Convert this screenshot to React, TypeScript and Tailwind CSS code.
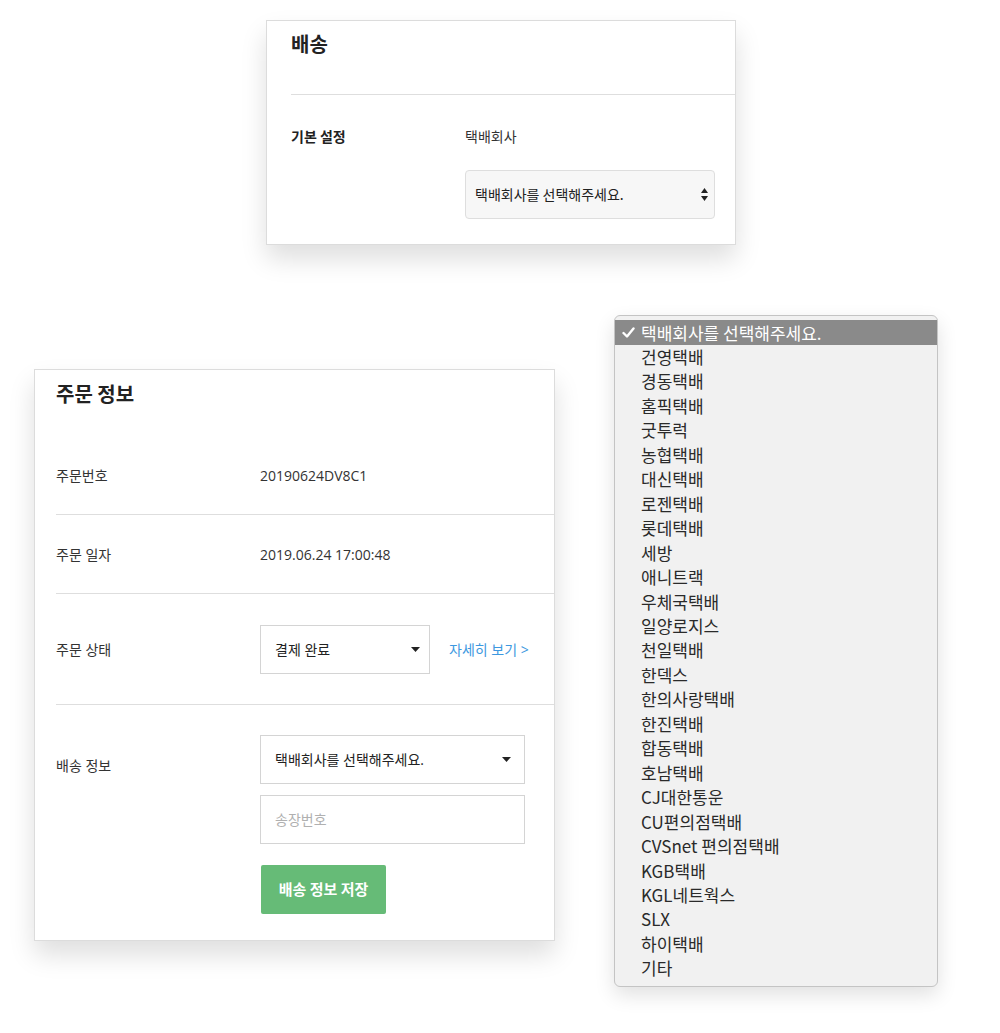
import React from "react";

const carriers = [
  "건영택배","경동택배","홈픽택배","굿투럭","농협택배","대신택배","로젠택배","롯데택배","세방","애니트랙","우체국택배","일양로지스","천일택배","한덱스","한의사랑택배","한진택배","합동택배","호남택배","CJ대한통운","CU편의점택배","CVSnet 편의점택배","KGB택배","KGL네트웍스","SLX","하이택배","기타",
];

function Caret({ className }: { className?: string }) {
  return (
    <svg width="9" height="5" viewBox="0 0 9 5" className={className}>
      <path d="M0 0 L9 0 L4.5 5 Z" fill="#222" />
    </svg>
  );
}

export default function App() {
  const font = { fontFamily: '"Open Sans", "Noto Sans CJK KR", sans-serif' };
  return (
    <div className="min-h-[1033px] w-[1000px] bg-white text-[#222]" style={font}>
      {/* Top card */}
      <div className="ml-[266px] mt-[20px] w-[470px] h-[225px] border border-[#dcdcdc] bg-white shadow-[0_14px_24px_rgba(0,0,0,0.13)]">
        <div className="pl-[24px] pt-[9px]">
          <div className="text-[20px] leading-[28px] font-bold text-[#222]" style={{ fontFamily: '"Noto Sans CJK KR", sans-serif' }}>배송</div>
          <div className="mt-[36px] border-t border-[#dedede]" />
          <div className="flex pt-[31px]">
            <div className="w-[174px] text-[14px] leading-[20px] font-bold" style={{ fontFamily: '"Noto Sans CJK KR", sans-serif' }}>기본 설정</div>
            <div className="flex flex-col">
              <div className="text-[14px] leading-[20px] text-[#333]" style={{ fontFamily: '"Noto Sans CJK KR", sans-serif' }}>택배회사</div>
              <div className="mt-[24px] flex h-[49px] w-[250px] items-center justify-between rounded-[4px] border border-[#dedede] bg-[#f7f7f7] pl-[9px] pr-[6px]">
                <span className="text-[14px] text-[#222]" style={{ fontFamily: '"Noto Sans CJK KR", sans-serif' }}>택배회사를 선택해주세요.</span>
                <svg width="7" height="13" viewBox="0 0 7 13">
                  <path d="M3.5 0 L7 5 L0 5 Z" fill="#222" />
                  <path d="M0 8 L7 8 L3.5 13 Z" fill="#222" />
                </svg>
              </div>
            </div>
          </div>
        </div>
      </div>

      <div className="mt-[70px] flex items-start">
        {/* Order info card */}
        <div className="ml-[34px] mt-[54px] w-[521px] border border-[#dcdcdc] bg-white shadow-[0_14px_24px_rgba(0,0,0,0.13)]">
          <div className="pl-[21px] pt-[10px] h-[67px]">
            <div className="text-[20px] leading-[28px] font-bold" style={{ fontFamily: '"Noto Sans CJK KR", sans-serif' }}>주문 정보</div>
          </div>
          <div className="ml-[21px] flex h-[78px] items-center border-b border-[#dedede] text-[14px] text-[#333]">
            <div className="w-[204px]">주문번호</div>
            <div>20190624DV8C1</div>
          </div>
          <div className="ml-[21px] flex h-[79px] items-center border-b border-[#dedede] text-[14px] text-[#333]">
            <div className="w-[204px]">주문 일자</div>
            <div>2019.06.24 17:00:48</div>
          </div>
          <div className="ml-[21px] flex h-[111px] items-center border-b border-[#dedede] text-[14px] text-[#333]">
            <div className="w-[204px]">주문 상태</div>
            <div className="flex h-[49px] w-[170px] items-center justify-between border border-[#d4d4d4] bg-white pl-[14px] pr-[9px]">
              <span className="text-[#222]">결제 완료</span>
              <Caret />
            </div>
            <div className="ml-[19px] text-[#3d98e0]">자세히 보기 &gt;</div>
          </div>
          <div className="ml-[21px] flex pt-[30px] pb-[26px] text-[14px] text-[#333]">
            <div className="w-[204px] pt-[20px]">배송 정보</div>
            <div className="flex flex-col">
              <div className="flex h-[49px] w-[265px] items-center justify-between border border-[#d4d4d4] bg-white pl-[14px] pr-[13px]">
                <span className="text-[#222]">택배회사를 선택해주세요.</span>
                <Caret />
              </div>
              <div className="mt-[11px] flex h-[49px] w-[265px] items-center border border-[#d4d4d4] bg-white pl-[14px]">
                <span className="text-[#b0b0b0]">송장번호</span>
              </div>
              <button className="mt-[21px] ml-[1px] flex h-[49px] w-[125px] items-center justify-center rounded-[2px] bg-[#66bb77] text-[15px] font-bold text-white" style={{ fontFamily: '"Noto Sans CJK KR", sans-serif' }}>
                배송 정보 저장
              </button>
            </div>
          </div>
        </div>

        {/* Dropdown */}
        <div
          className="ml-[59px] w-[324px] rounded-[6px] border border-[#c4c4c4] bg-[#f1f1f1] pt-[4px] pb-[6px] shadow-[0_8px_20px_rgba(0,0,0,0.12)]"
          style={{ fontFamily: '"Noto Sans CJK KR", sans-serif' }}
        >
          <div className="flex h-[24.5px] items-center bg-[#8a8a8a] text-[17px] text-white">
            <span className="flex w-[26px] justify-center pl-[1px]">
              <svg width="13" height="11" viewBox="0 0 13 11">
                <path d="M1.5 6 L5 9.5 L11.5 1.5" stroke="#fff" strokeWidth="2.4" fill="none" strokeLinecap="round" strokeLinejoin="round" />
              </svg>
            </span>
            <span>택배회사를 선택해주세요.</span>
          </div>
          {carriers.map((c) => (
            <div key={c} className="flex h-[24.46px] items-center pl-[26px] text-[17px] text-[#2a2a2a]">
              {c}
            </div>
          ))}
        </div>
      </div>
    </div>
  );
}
